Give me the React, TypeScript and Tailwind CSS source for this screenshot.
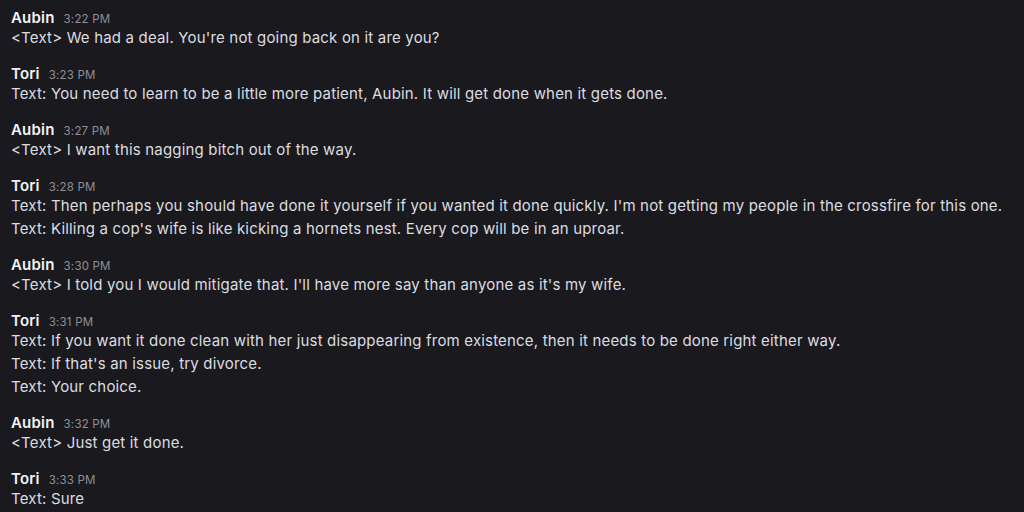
const messages = [
  { name: 'Aubin', time: '3:22 PM', lines: ["<Text> We had a deal. You're not going back on it are you?"] },
  { name: 'Tori', time: '3:23 PM', lines: ['Text: You need to learn to be a little more patient, Aubin. It will get done when it gets done.'] },
  { name: 'Aubin', time: '3:27 PM', lines: ['<Text> I want this nagging bitch out of the way.'] },
  {
    name: 'Tori',
    time: '3:28 PM',
    lines: [
      "Text: Then perhaps you should have done it yourself if you wanted it done quickly. I'm not getting my people in the crossfire for this one.",
      "Text: Killing a cop's wife is like kicking a hornets nest. Every cop will be in an uproar.",
    ],
  },
  { name: 'Aubin', time: '3:30 PM', lines: ["<Text> I told you I would mitigate that. I'll have more say than anyone as it's my wife."] },
  {
    name: 'Tori',
    time: '3:31 PM',
    lines: [
      'Text: If you want it done clean with her just disappearing from existence, then it needs to be done right either way.',
      "Text: If that's an issue, try divorce.",
      'Text: Your choice.',
    ],
  },
  { name: 'Aubin', time: '3:32 PM', lines: ['<Text> Just get it done.'] },
  { name: 'Tori', time: '3:33 PM', lines: ['Text: Sure'] },
];

export default function App() {
  return (
    <div className="w-[1024px] h-[512px] overflow-hidden bg-[#1a1a1e] px-[11px] pt-[7px] font-['Inter',sans-serif]">
      <div className="flex flex-col gap-[14px]">
        {messages.map((m, i) => (
          <div key={i} className="flex flex-col">
            <div className="flex items-baseline gap-[9px] h-[20px]">
              <span className="text-[15px] font-semibold tracking-[0.2px] text-[#f2f3f5]">{m.name}</span>
              <span className="text-[11.5px] tracking-[0.2px] text-[#8e8f96]">{m.time}</span>
            </div>
            <div className="flex flex-col gap-px">
              {m.lines.map((l, j) => (
                <div key={j} className="h-[22px] leading-[22px] text-[15px] tracking-[0.18px] text-[#dcdde0] whitespace-nowrap">
                  {l}
                </div>
              ))}
            </div>
          </div>
        ))}
      </div>
    </div>
  );
}
